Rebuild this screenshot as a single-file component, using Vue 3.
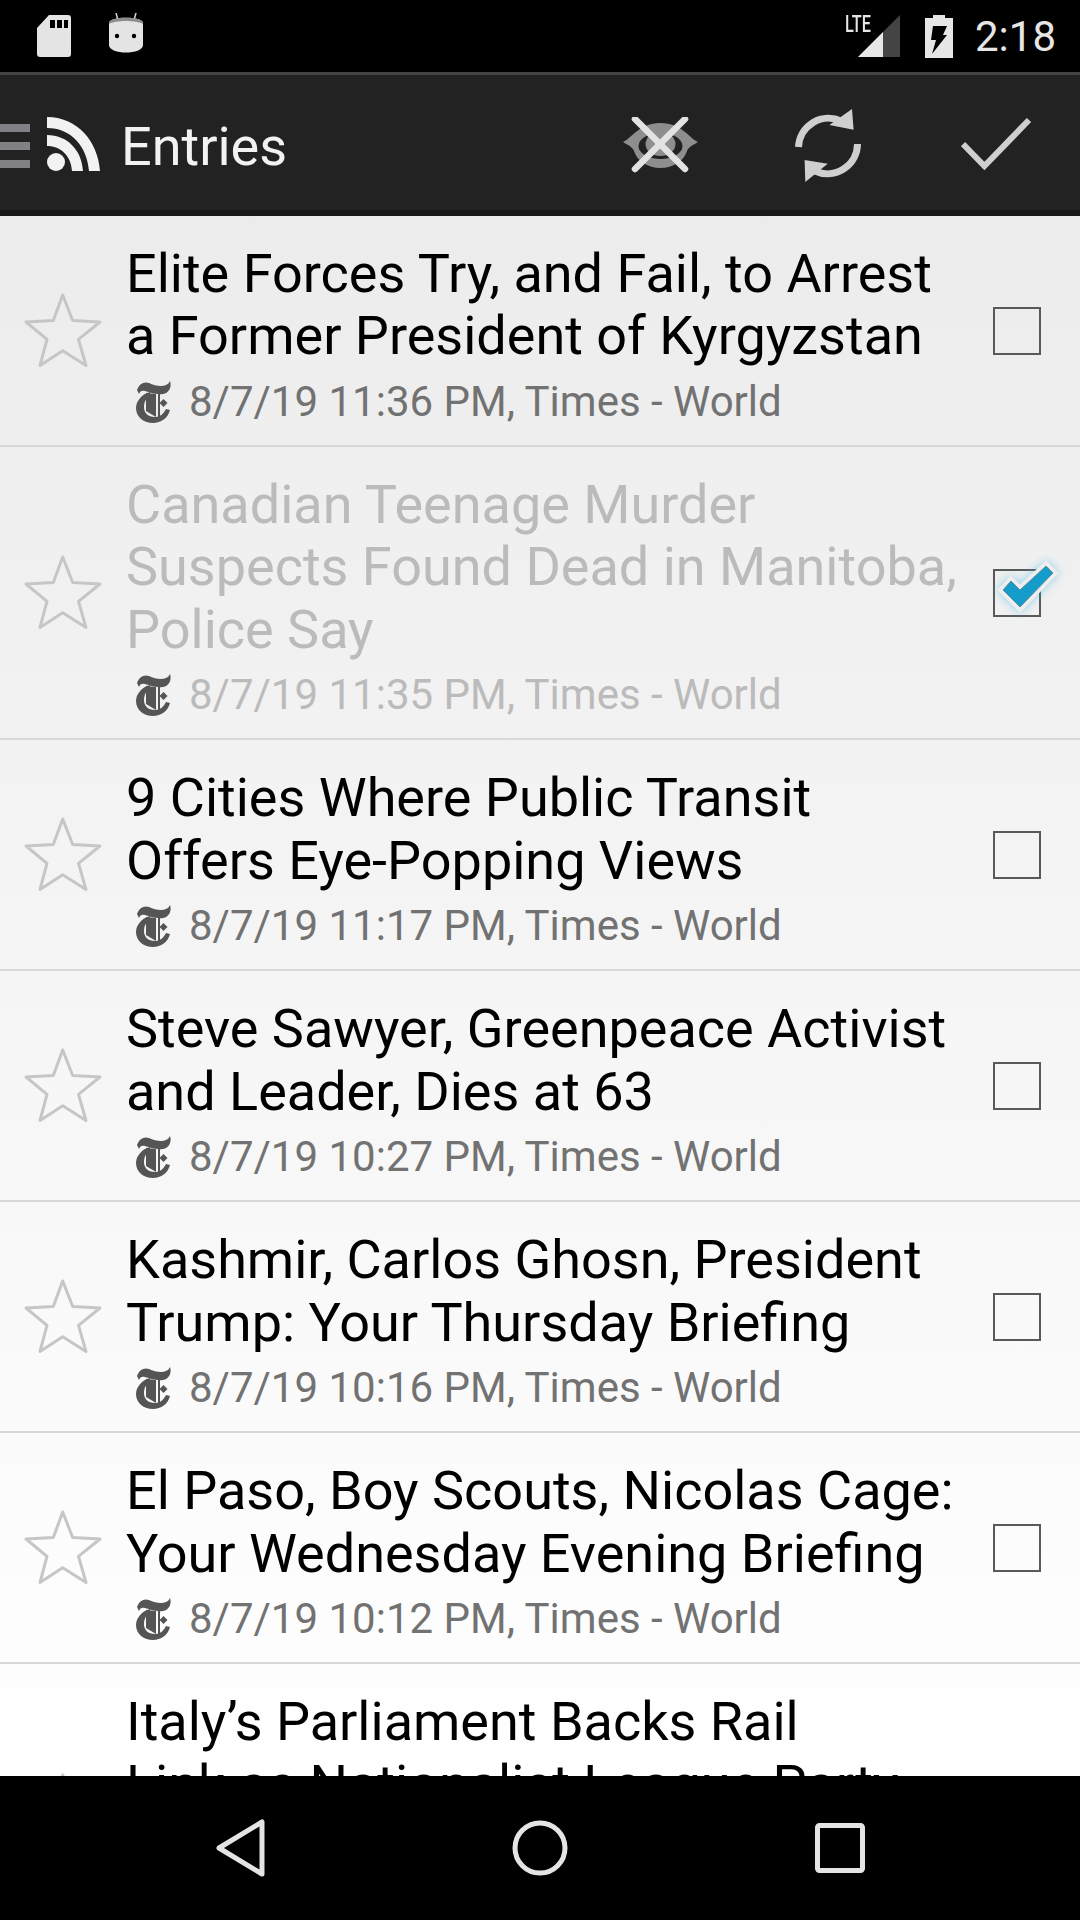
<template>
  <div class="screen">
    <div class="status-bar">
      <svg class="sd" viewBox="0 0 34 42" width="34" height="42">
        <path d="M12 0H31a3 3 0 0 1 3 3V39a3 3 0 0 1-3 3H3a3 3 0 0 1-3-3V13Z" fill="#e4e4e4" />
        <rect x="13" y="5" width="5" height="8" fill="#000" />
        <rect x="20" y="5" width="5" height="8" fill="#000" />
        <rect x="27" y="5" width="4" height="8" fill="#000" />
      </svg>
      <svg class="droid" viewBox="0 0 34 40" width="34" height="40">
        <path d="M7 0l2 7M27 0l-2 7" stroke="#d8d8d8" stroke-width="1.5" fill="none" />
        <path d="M0 10C0 3 34 3 34 10V32C34 42 0 42 0 32Z" fill="#e4e4e4" />
        <path d="M0 10C0 3 34 3 34 10V11C28 7 6 7 0 11Z" fill="#8c8c8c" />
        <circle cx="8" cy="23" r="2.2" fill="#000" />
        <circle cx="25" cy="23" r="2.2" fill="#000" />
      </svg>
      <div class="status-right">
        <div class="signal">
          <span class="lte">LTE</span>
          <svg viewBox="0 0 42 42" width="42" height="42">
            <path d="M0 42L42 0V42Z" fill="#444" />
            <path d="M0 42L25 17V42Z" fill="#e6e6e6" />
          </svg>
        </div>
        <svg class="battery" viewBox="0 0 28 43" width="28" height="43">
          <path d="M8 0H20V3H28V43H0V3H8Z" fill="#e6e6e6" />
          <path d="M8 11H22L18 20H22L7 39L11 25H6Z" fill="#000" />
        </svg>
        <span class="clock">2:18</span>
      </div>
    </div>

    <div class="toolbar">
      <div class="menu-lines"><i></i><i></i><i></i></div>
      <svg class="rss" viewBox="0 0 53 54" width="53" height="54">
        <circle cx="9" cy="45" r="9" fill="#f2f2f2" />
        <path d="M0 18C20 18 35 33 36 54H25C24 39 14 29 0 29Z" fill="#f2f2f2" />
        <path d="M0 0C30 0 51 24 53 54H42C40 29 24 11 0 11Z" fill="#f2f2f2" />
      </svg>
      <span class="toolbar-title">Entries</span>
      <div class="actions">
        <svg class="act-eye" viewBox="0 -6 75 56" width="75" height="56">
          <path d="M0 19C8 16 16 0 37.5 0C59 0 67 16 75 19C71 22 66 23 64 28C61 38 50 45 37.5 45C25 45 14 38 11 28C9 23 4 22 0 19Z" fill="#8e8e8e" />
          <ellipse cx="37.5" cy="23" rx="22" ry="13" fill="#222" />
          <ellipse cx="37.5" cy="21" rx="15" ry="12" fill="#8e8e8e" />
          <path d="M12 -4L62 46M62 -4L12 46" stroke="#e2e2e2" stroke-width="6.5" stroke-linecap="round" />
        </svg>
        <svg class="act-sync" viewBox="0 0 66 73" width="66" height="73">
          <path d="M3.5 38A30 30 0 0 1 46 12" fill="none" stroke="#cfcfcf" stroke-width="7" />
          <path d="M57 0L58.6 20.7L34.4 16Z" fill="#cfcfcf" />
          <path d="M62.5 35A30 30 0 0 1 20 62" fill="none" stroke="#cfcfcf" stroke-width="7" />
          <path d="M10.3 73L9.6 51L32.7 54.7Z" fill="#cfcfcf" />
        </svg>
        <svg class="act-check" viewBox="0 0 71 53" width="71" height="53">
          <path d="M2 27L23.4 49L68 3" fill="none" stroke="#cfcfcf" stroke-width="6" />
        </svg>
      </div>
    </div>

    <div class="list">
      <div v-for="(entry, i) in entries" :key="i" class="row" :class="{ read: entry.read }">
        <div class="star-col">
          <svg viewBox="-2 -2 80 77" width="80" height="77">
            <path d="M37.7 1L47.7 26.5L75 28L53.5 45.3L61 71.5L37.7 56.7L15 71.5L22 45.3L1 28L28.3 26.5Z" fill="none" stroke="#c6c6c6" stroke-width="3" stroke-linejoin="round" />
          </svg>
        </div>
        <div class="body">
          <div class="title">{{ entry.title }}</div>
          <div class="meta">
            <svg class="nyt" viewBox="0 0 36 42" width="36" height="42">
              <path d="M1 9C3 3 8 0 13 2C19 5 26 6 30 4C32 3 33 2 34 0C36 6 33 12 27 13C20 14 13 11 9 10C6 9 4 10 3 13Z" fill="#555" />
              <path d="M14 11C6 13 0 20 0 27C0 36 8 42 17 42C25 42 32 37 34 29L30 28C27 34 23 36 19 36C12 36 8 32 8 26C8 21 10 17 14 15Z" fill="#555" />
              <path d="M10 12L20 13V36L10 30Z" fill="#555" />
              <path d="M23 12V36" stroke="#555" stroke-width="2" />
              <path d="M27.5 18L31.5 22L27.5 26L23.5 22Z" fill="#555" />
            </svg>
            <span>{{ entry.meta }}</span>
          </div>
        </div>
        <div class="check-col">
          <div class="box" :class="{ checked: entry.read }">
            <svg v-if="entry.read" class="tick" viewBox="0 0 58 42" width="58" height="42">
              <path d="M8 24L16 15L25 24L51 0L58 7L25 41Z" fill="#eee" stroke="#eee" stroke-width="8" />
              <path d="M8 24L16 15L25 24L51 0L58 7L25 41Z" fill="#149ccb" stroke="#5f8ba0" stroke-width="1" />
            </svg>
          </div>
        </div>
      </div>
    </div>

    <div class="nav-bar">
      <svg viewBox="0 0 50 58" width="50" height="58">
        <path d="M46 3V55L3 29Z" fill="none" stroke="#e4e4e4" stroke-width="5" stroke-linejoin="round" />
      </svg>
      <svg viewBox="0 0 56 56" width="56" height="56">
        <circle cx="28" cy="28" r="25" fill="none" stroke="#e4e4e4" stroke-width="5" />
      </svg>
      <svg viewBox="0 0 50 50" width="50" height="50">
        <rect x="2.5" y="2.5" width="45" height="45" rx="2" fill="none" stroke="#e4e4e4" stroke-width="5" />
      </svg>
    </div>
  </div>
</template>

<script setup>
const entries = [
  { title: 'Elite Forces Try, and Fail, to Arrest\na Former President of Kyrgyzstan', meta: '8/7/19 11:36 PM, Times - World' },
  { title: 'Canadian Teenage Murder\nSuspects Found Dead in Manitoba,\nPolice Say', meta: '8/7/19 11:35 PM, Times - World', read: true },
  { title: '9 Cities Where Public Transit\nOffers Eye-Popping Views', meta: '8/7/19 11:17 PM, Times - World' },
  { title: 'Steve Sawyer, Greenpeace Activist\nand Leader, Dies at 63', meta: '8/7/19 10:27 PM, Times - World' },
  { title: 'Kashmir, Carlos Ghosn, President\nTrump: Your Thursday Briefing', meta: '8/7/19 10:16 PM, Times - World' },
  { title: 'El Paso, Boy Scouts, Nicolas Cage:\nYour Wednesday Evening Briefing', meta: '8/7/19 10:12 PM, Times - World' },
  { title: 'Italy’s Parliament Backs Rail\nLink as Nationalist League Party\nObjects', meta: '8/7/19 10:01 PM, Times - World' }
]
</script>

<style>
html,
body {
  margin: 0;
  background: #000;
}
</style>

<style scoped>
.screen {
  width: 1080px;
  height: 1920px;
  display: flex;
  flex-direction: column;
  overflow: hidden;
  font-family: Roboto, sans-serif;
}
.status-bar {
  height: 72px;
  flex: none;
  background: #000;
  display: flex;
  align-items: center;
  padding: 0 24px 0 37px;
  box-sizing: border-box;
}
.droid {
  margin-left: 38px;
  margin-top: -6px;
}
.status-right {
  margin-left: auto;
  display: flex;
  align-items: center;
}
.signal {
  position: relative;
  width: 53px;
  height: 42px;
  display: flex;
  justify-content: flex-end;
  align-items: flex-end;
}
.lte {
  position: absolute;
  left: -2px;
  top: -3px;
  font-size: 24px;
  line-height: 24px;
  font-weight: 500;
  color: #e6e6e6;
  transform: scaleX(.68);
  transform-origin: left;
}
.battery {
  margin-left: 25px;
}
.clock {
  margin-left: 22px;
  font-size: 42px;
  color: #e6e6e6;
}
.toolbar {
  height: 144px;
  flex: none;
  box-sizing: border-box;
  background: #222;
  border-top: 3px solid #444;
  border-bottom: 6px solid #1a1a1a;
  padding-top: 7px;
  display: flex;
  align-items: center;
}
.menu-lines {
  width: 30px;
  display: flex;
  flex-direction: column;
  gap: 10px;
}
.menu-lines i {
  height: 8px;
  background: #808085;
}
.rss {
  margin-left: 17px;
  margin-top: -4px;
}
.toolbar-title {
  margin-left: 21px;
  font-size: 54px;
  color: #f2f2f2;
}
.actions {
  margin-left: auto;
  display: flex;
  align-items: center;
  padding-right: 48px;
}
.act-eye {
  margin-top: -2px;
}
.act-sync {
  margin-left: 97px;
  margin-top: -2px;
}
.act-check {
  margin-left: 100px;
  margin-top: -5px;
}
.list {
  flex: 1;
  min-height: 0;
  overflow: hidden;
  background: linear-gradient(#ececec, #fff);
}
.row {
  display: flex;
  align-items: center;
  border-bottom: 2px solid #d8d8d8;
}
.star-col {
  width: 126px;
  flex: none;
  display: flex;
  padding-left: 23px;
  box-sizing: border-box;
}
.body {
  flex: 1;
  min-width: 0;
  padding: 27px 0 15px;
}
.title {
  font-size: 54px;
  line-height: 62.4px;
  color: #000;
  white-space: pre-line;
}
.meta {
  display: flex;
  align-items: center;
  gap: 17px;
  margin-top: 6.2px;
  padding-left: 10px;
  font-size: 42px;
  line-height: 56px;
  color: #727272;
}
.read .title,
.read .meta {
  color: #bbb;
}
.check-col {
  width: 120px;
  flex: none;
  display: flex;
  padding-left: 33px;
  box-sizing: border-box;
}
.box {
  position: relative;
  width: 48px;
  height: 48px;
  box-sizing: border-box;
  border: 2px solid #595959;
}
.tick {
  position: absolute;
  left: 0;
  top: -5px;
  overflow: visible;
  filter: drop-shadow(0 0 5px rgba(60, 180, 230, .55));
}
.nav-bar {
  height: 144px;
  flex: none;
  background: #000;
  display: flex;
  align-items: center;
  padding-left: 216px;
}
.nav-bar svg:nth-child(2) {
  margin-left: 246px;
}
.nav-bar svg:nth-child(3) {
  margin-left: 247px;
}
</style>
